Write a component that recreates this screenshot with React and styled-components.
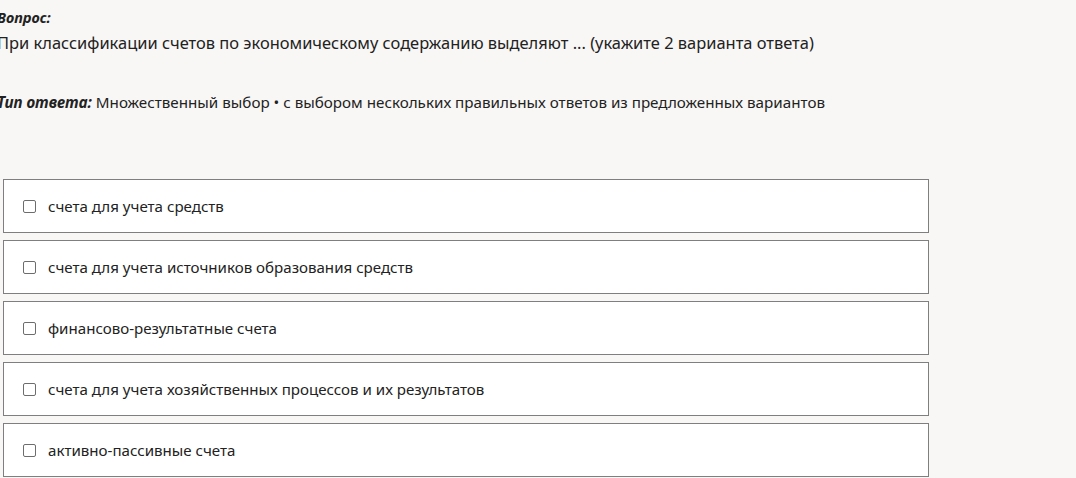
import React from 'react';
import styled, { createGlobalStyle } from 'styled-components';

const Global = createGlobalStyle`
  html, body {
    margin: 0;
    padding: 0;
    background: #f8f7f5;
    font-family: "Noto Sans", "Open Sans", sans-serif;
    color: #222;
    overflow: hidden;
  }
`;

const Page = styled.div`
  margin-left: -3px;
  padding-top: 7px;
`;

const Label = styled.div`
  font-size: 14.5px;
  font-weight: bold;
  font-style: italic;
  line-height: 20px;
  color: #222;
`;

const Question = styled.div`
  font-size: 16.45px;
  line-height: 22px;
  margin-top: 5px;
  white-space: nowrap;
`;

const TypeRow = styled.div`
  font-size: 15.2px;
  line-height: 20px;
  margin-top: 38px;
  white-space: nowrap;
`;

const Strong = styled.b`
  font-style: italic;
`;

const List = styled.div`
  margin: 67px 0 0 6px;
  width: 926px;
  display: flex;
  flex-direction: column;
  gap: 7px;
`;

const Option = styled.label`
  box-sizing: border-box;
  height: 54px;
  background: #fff;
  border: 1px solid #7f7f7f;
  display: flex;
  align-items: center;
  padding-left: 19px;
  font-size: 15.1px;
  color: #222;
  cursor: pointer;
`;

const Box = styled.span`
  box-sizing: border-box;
  width: 13px;
  height: 13px;
  border: 1px solid #6d6d6d;
  border-radius: 2px;
  background: #fff;
  margin-right: 12px;
  flex-shrink: 0;
`;

const options = [
  'счета для учета средств',
  'счета для учета источников образования средств',
  'финансово-результатные счета',
  'счета для учета хозяйственных процессов и их результатов',
  'активно-пассивные счета',
];

export default function App() {
  return (
    <Page>
      <Global />
      <Label>Вопрос:</Label>
      <Question>
        При классификации счетов по экономическому содержанию выделяют ... (укажите 2 варианта ответа)
      </Question>
      <TypeRow>
        <Strong>Тип ответа:</Strong> Множественный выбор • с выбором нескольких правильных ответов из предложенных вариантов
      </TypeRow>
      <List>
        {options.map((o) => (
          <Option key={o}>
            <Box />
            {o}
          </Option>
        ))}
      </List>
    </Page>
  );
}
